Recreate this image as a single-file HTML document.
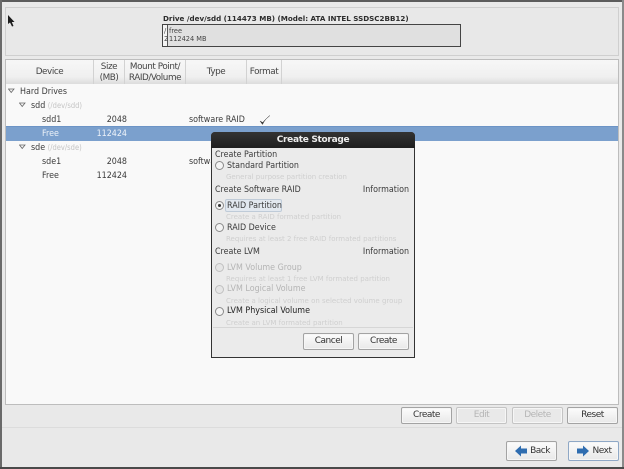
<!DOCTYPE html>
<html><head><meta charset="utf-8"><style>
html,body{margin:0;padding:0}
body{width:624px;height:469px;overflow:hidden;position:relative;background:#e9e9e9;font-family:"DejaVu Sans",sans-serif;font-size:9px;color:#3a3a3a}
div{position:absolute;box-sizing:border-box}
.t{white-space:nowrap;line-height:12px;filter:blur(.3px);transform:scaleX(.885);transform-origin:left center}
.r{text-align:right;transform-origin:right center}
.n{transform:none}
.s{font-size:7.6px;color:#c4c4c4}
.h{font-size:7px;color:#cfcfcf;transform:none}
.g{color:#b4b4b4}
.btn{border:1px solid #a3a3a3;border-radius:2px;background:linear-gradient(#fcfcfc,#e8e8e8);text-align:center;font-size:9px;letter-spacing:-.5px;line-height:15px;color:#333;box-shadow:inset 0 0 0 1px #f6f6f6;filter:blur(.2px)}
.dis{color:#b5b5b5;border-color:#c4c4c4;background:#e9e9e9}
.hd{top:60px;height:24px;border-right:1px solid #d2d2d2;text-align:center;line-height:11px;font-size:8.8px;letter-spacing:-.42px;color:#444;padding-top:2px;filter:blur(.2px)}
.radio{width:9px;height:9px;border:1px solid #8a8a8a;border-radius:50%;background:#f4f4f4;left:215px}
.radio.off{border-color:#c0c0c0;background:#e6e6e6}
</style></head><body>
<div style="left:0;top:0;width:624px;height:2px;background:#5c5c5c"></div>
<div style="left:2px;top:427px;width:620px;height:1px;background:#dcdcdc"></div>
<div style="left:0;top:0;width:2px;height:469px;background:#6a6a6a"></div>
<div style="left:622px;top:0;width:2px;height:469px;background:#8a8a8a"></div>
<div style="left:0;top:467px;width:624px;height:2px;background:#4a4a4a"></div>

<div style="left:5px;top:7px;width:614px;height:49px;border:1px solid #cfcfcf;background:#e8e8e8"></div>
<svg style="position:absolute;left:7px;top:14px" width="9" height="14" viewBox="0 0 9 14"><path d="M1 1L1 10L3 8.500L5 12.500L6.500 12L4.800 8L7.500 8Z" fill="#1c1c1c"/></svg>
<div class="t n" style="left:163px;top:13px;font-size:7.15px;font-weight:bold;color:#2c2c2c">Drive /dev/sdd (114473 MB) (Model: ATA INTEL SSDSC2BB12)</div>
<div style="left:162px;top:24px;width:299px;height:23px;border:1px solid #444;background:#e0e0e0"></div>
<div style="left:163px;top:25px;width:5px;height:21px;background:#f4f4f4;border-right:1px solid #555"></div>
<div class="t n" style="left:164px;top:27px;font-size:6.6px;line-height:8px;color:#444">/</div>
<div class="t n" style="left:164px;top:35px;font-size:6.6px;line-height:8px;color:#444">2</div>
<div class="t n" style="left:169px;top:27px;font-size:6.6px;line-height:8px;color:#444">free</div>
<div class="t n" style="left:169px;top:35px;font-size:6.6px;line-height:8px;color:#444">112424 MB</div>

<div style="left:5px;top:59px;width:614px;height:346px;border:1px solid #bdbdbd;background:#f9f9f9"></div>
<div style="left:6px;top:60px;width:612px;height:24px;background:linear-gradient(#f7f7f7,#f0f0f0 70%,#dcdcdc)"></div>
<div class="hd" style="left:6px;width:88px;line-height:20px">Device</div>
<div class="hd" style="left:94px;width:31px">Size<br>(MB)</div>
<div class="hd" style="left:125px;width:61px;white-space:nowrap">Mount Point/<br>RAID/Volume</div>
<div class="hd" style="left:186px;width:61px;line-height:20px">Type</div>
<div class="hd" style="left:247px;width:35px;line-height:20px">Format</div>

<svg style="position:absolute;left:8px;top:88px" width="7" height="6"><path d="M.5 1H6L3.200 4.500Z" fill="#f4f4f4" stroke="#666" stroke-width=".8"/></svg>
<div class="t" style="left:20px;top:86px">Hard Drives</div>
<svg style="position:absolute;left:19px;top:102px" width="7" height="6"><path d="M.5 1H6L3.200 4.500Z" fill="#f4f4f4" stroke="#666" stroke-width=".8"/></svg>
<div class="t" style="left:31px;top:100px">sdd <span class="s">(/dev/sdd)</span></div>
<div class="t" style="left:42px;top:114px">sdd1</div>
<div class="t r" style="left:87px;top:114px;width:40px">2048</div>
<div class="t" style="left:189px;top:114px">software RAID</div>
<svg style="position:absolute;left:258px;top:114px" width="14" height="12"><path d="M2 7L4.500 10.500Q7 5 12 1.500Q7.500 5 4.700 8.500Z" fill="#333" stroke="#333" stroke-width=".4"/></svg>

<div style="left:6px;top:126px;width:612px;height:15px;background:#7ba0cd;border-top:1px solid #6c94c6"></div>
<div class="t" style="left:42px;top:128px;color:#eef3f9">Free</div>
<div class="t r" style="left:87px;top:128px;width:40px;color:#eef3f9">112424</div>

<svg style="position:absolute;left:19px;top:144px" width="7" height="6"><path d="M.5 1H6L3.200 4.500Z" fill="#f4f4f4" stroke="#666" stroke-width=".8"/></svg>
<div class="t" style="left:31px;top:142px">sde <span class="s">(/dev/sde)</span></div>
<div class="t" style="left:42px;top:156px">sde1</div>
<div class="t r" style="left:87px;top:156px;width:40px">2048</div>
<div class="t" style="left:189px;top:156px">software RAID</div>
<div class="t" style="left:42px;top:170px">Free</div>
<div class="t r" style="left:87px;top:170px;width:40px">112424</div>

<div class="btn" style="left:401px;top:407px;width:51px;height:17px">Create</div>
<div class="btn dis" style="left:456px;top:407px;width:51px;height:17px">Edit</div>
<div class="btn dis" style="left:512px;top:407px;width:51px;height:17px">Delete</div>
<div class="btn" style="left:567px;top:407px;width:51px;height:17px">Reset</div>
<div class="btn" style="left:506px;top:441px;width:51px;height:20px;line-height:18px;padding-left:17px">Back</div>
<svg style="position:absolute;left:515px;top:445px" width="13" height="12"><path d="M0 6L6 .5V3.500H12V8.500H6V11.500Z" fill="#2f6db0"/></svg>
<div class="btn" style="left:568px;top:441px;width:51px;height:20px;line-height:18px;padding-left:17px;border-color:#8fa8c6">Next</div>
<svg style="position:absolute;left:577px;top:445px" width="13" height="12"><path d="M12 6L6 .5V3.500H0V8.500H6V11.500Z" fill="#2f6db0"/></svg>

<div style="left:211px;top:132px;width:204px;height:226px;background:#ebebeb;border:1px solid #333;border-radius:4px 4px 0 0"></div>
<div style="left:211px;top:132px;width:204px;height:16px;background:linear-gradient(#333,#1e1e1e);border-radius:4px 4px 0 0;color:#eee;font-weight:bold;font-size:9px;letter-spacing:-.3px;line-height:16px;text-align:center;filter:blur(.2px)">Create Storage</div>

<div class="t" style="left:215px;top:149px">Create Partition</div>
<div class="radio" style="top:161px"></div>
<div class="t" style="left:227px;top:160px">Standard Partition</div>
<div class="t h" style="left:226px;top:171px">General purpose partition creation</div>
<div class="t" style="left:215px;top:184px">Create Software RAID</div>
<div class="t r" style="left:309px;top:184px;width:100px">Information</div>
<div class="radio" style="top:201px"></div>
<div style="left:218px;top:204px;width:3px;height:3px;background:#333;border-radius:50%"></div>
<div style="left:225px;top:199px;width:57px;height:13px;background:#e2e8ef;border:1px solid #bfcbd8;border-radius:2px"></div>
<div class="t" style="left:227px;top:200px">RAID Partition</div>
<div class="t h" style="left:226px;top:211px">Create a RAID formated partition</div>
<div class="radio" style="top:223px"></div>
<div class="t" style="left:227px;top:222px">RAID Device</div>
<div class="t h" style="left:226px;top:233px">Requires at least 2 free RAID formated partitions</div>
<div class="t" style="left:215px;top:246px">Create LVM</div>
<div class="t r" style="left:309px;top:246px;width:100px">Information</div>
<div class="radio off" style="top:263px"></div>
<div class="t g" style="left:227px;top:262px">LVM Volume Group</div>
<div class="t h" style="left:226px;top:273px">Requires at least 1 free LVM formated partition</div>
<div class="radio off" style="top:285px"></div>
<div class="t g" style="left:227px;top:283px">LVM Logical Volume</div>
<div class="t h" style="left:226px;top:295px">Create a logical volume on selected volume group</div>
<div class="radio" style="top:307px"></div>
<div class="t" style="left:227px;top:305px;color:#222">LVM Physical Volume</div>
<div class="t h" style="left:226px;top:317px">Create an LVM formated partition</div>
<div style="left:213px;top:327px;width:200px;height:1px;background:#d6d6d6"></div>
<div class="btn" style="left:303px;top:333px;width:51px;height:17px">Cancel</div>
<div class="btn" style="left:358px;top:333px;width:51px;height:17px">Create</div>
</body></html>
